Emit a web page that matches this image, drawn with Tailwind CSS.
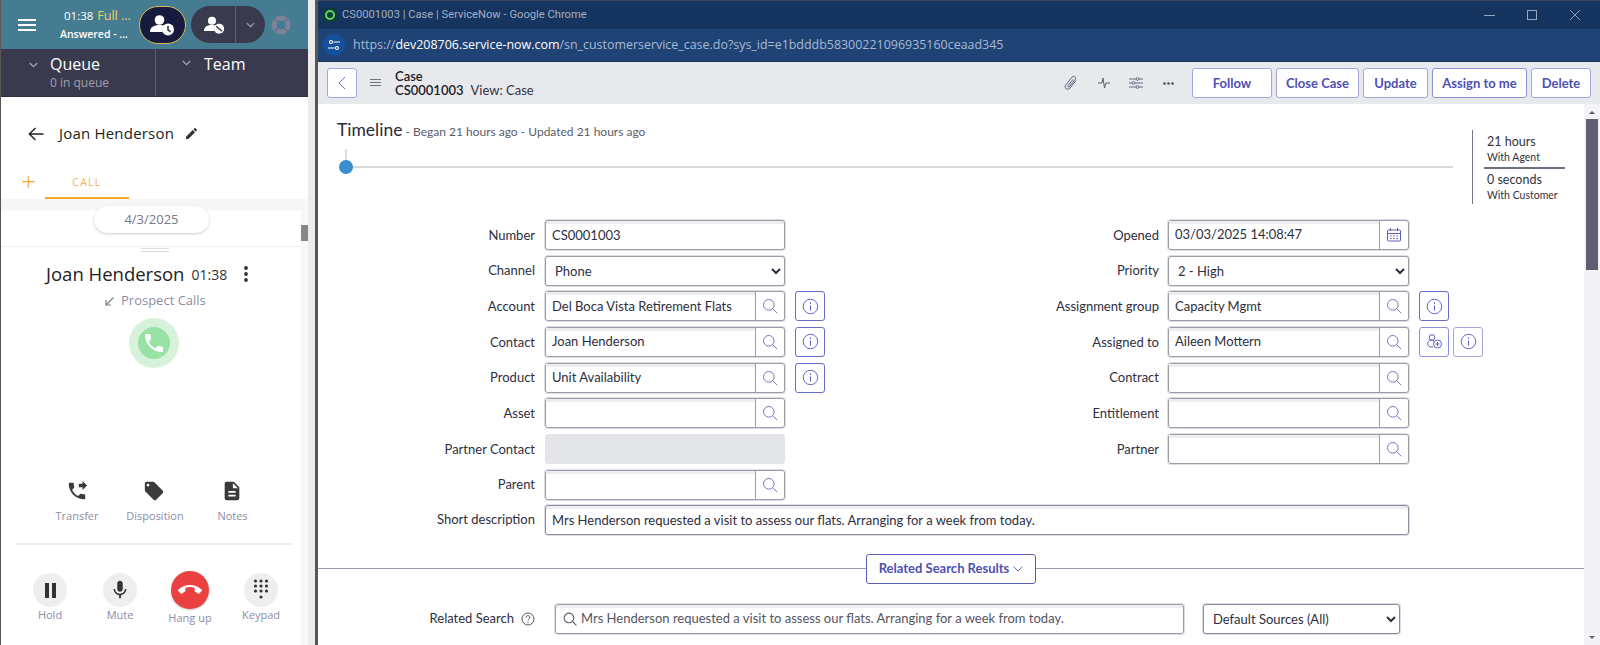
<!DOCTYPE html>
<html>
<head>
<meta charset="UTF-8" />
<title>CS0001003 | Case | ServiceNow</title>
<script src="https://cdn.jsdelivr.net/npm/@tailwindcss/browser@4"></script>
</head>
<body class="bg-white">
<svg class="hidden">
	<symbol id="search" viewBox="0 0 16 16"><circle cx="6.8" cy="6.8" r="5.3" fill="none" stroke="#7478cc" stroke-width="1"/><path d="M10.6 10.6l4.6 4.6" stroke="#7478cc" stroke-width="1" fill="none"/></symbol>
	<symbol id="info" viewBox="0 0 16 16"><circle cx="8" cy="8" r="6.8" fill="none" stroke="#5c60bd" stroke-width="0.9"/><path d="M8 7v4.8M8 4.2v1.4" stroke="#5c60bd" stroke-width="1" fill="none"/></symbol>
</svg>
<div class="flex w-[1600px] h-[645px] overflow-hidden font-['Lato',sans-serif]">

	<!-- softphone panel -->
	<aside class="w-[308px] shrink-0 h-full flex flex-col border-l border-[#5b5655] font-['Open_Sans',sans-serif]">
		<div class="h-[49px] bg-[#467c92] flex items-center text-white">
			<svg class="w-[18px] h-[12px] ml-[17px]" viewBox="0 0 18 12" fill="#fff"><rect y="0" width="18" height="2"/><rect y="5" width="18" height="2"/><rect y="10" width="18" height="2"/></svg>
			<div class="w-[76px] ml-[28px] mt-[1px] text-[11.5px] leading-[18px] whitespace-nowrap">
				<div>01:38 <span class="text-[#f2d14f] text-[12.5px] ml-[1px]">Full ...</span></div>
				<div class="text-[10.5px] -ml-[4px] font-semibold">Answered - ...</div>
			</div>
			<button class="w-[47px] h-[38px] ml-[-1px] rounded-full bg-[#171a3c] border border-[#d7bd55] flex items-center justify-center">
				<svg class="w-[25px] h-[22px]" viewBox="0 0 25 22"><circle cx="9.5" cy="6" r="4.8" fill="#fff"/><path d="M0 18c0-5 4-7 9.5-7 2 0 3.5.3 4.8.8a7 7 0 0 0-1.8 6.2z" fill="#fff"/><circle cx="18" cy="15.5" r="6" fill="#fff"/><path d="M18 12v4l2.6 1.6" stroke="#171a3c" stroke-width="1.4" fill="none"/></svg>
			</button>
			<div class="w-[74px] h-[37px] ml-[5px] rounded-full bg-[#3a3a4e] flex items-center">
				<div class="w-[45px] h-full flex items-center justify-center border-r border-[#5f6072] pl-[2px]">
					<svg class="w-[21px] h-[20px]" viewBox="0 0 25 22"><circle cx="9.5" cy="6" r="4.8" fill="#fff"/><path d="M0 18c0-5 4-7 9.5-7 2 0 3.5.3 4.8.8a7 7 0 0 0-1.8 6.2z" fill="#fff"/><circle cx="18" cy="15.5" r="6" fill="#fff"/><path d="M14.5 12.5l7 6" stroke="#3a3a4e" stroke-width="1.8"/></svg>
				</div>
				<svg class="w-[9px] h-[6px] ml-[10px]" viewBox="0 0 9 6" fill="none" stroke="#8b8c9c" stroke-width="1.5"><path d="M.8 1l3.7 3.6L8.2 1"/></svg>
			</div>
			<svg class="w-[20px] h-[20px] ml-[6px]" viewBox="0 0 20 20"><circle cx="10" cy="10" r="9.5" fill="#7b8398"/><path d="M3.3 3.3l13.4 13.4M16.7 3.3L3.3 16.7" stroke="#5f6a80" stroke-width="1.2"/><circle cx="10" cy="10" r="4.5" fill="#467c92"/></svg>
		</div>
		<div class="h-[48px] bg-[#3a3a4e] flex border-b border-[#2e2e3f]">
			<div class="w-[155px] flex border-r border-[#5c5d6e]">
				<svg class="w-[9px] h-[6px] ml-[28px] mt-[13px]" viewBox="0 0 9 6" fill="none" stroke="#a6a7b5" stroke-width="1.3"><path d="M.8 1l3.7 3.6L8.2 1"/></svg>
				<div class="ml-[12px] mt-[4px]">
					<div class="text-white text-[16px] leading-[22px]">Queue</div>
					<div class="text-[#a0a1af] text-[12px] leading-[17px] mt-[-1px]">0 in queue</div>
				</div>
			</div>
			<div class="flex-1 flex">
				<svg class="w-[9px] h-[6px] ml-[26px] mt-[11px]" viewBox="0 0 9 6" fill="none" stroke="#a6a7b5" stroke-width="1.3"><path d="M.8 1l3.7 3.6L8.2 1"/></svg>
				<div class="ml-[13px] mt-[4px] text-white text-[16px] leading-[22px]">Team</div>
			</div>
		</div>
		<div class="flex items-center h-[72px] pl-[27px] pt-[1px] text-[#222]">
			<svg class="w-[16px] h-[14px]" viewBox="0 0 16 14" fill="none" stroke="#222" stroke-width="1.4"><path d="M15.5 7H1.5M7.5 1L1.3 7l6.2 6"/></svg>
			<span class="ml-[15px] text-[15px] font-medium tracking-[0.2px]">Joan Henderson</span>
			<svg class="w-[11px] h-[11px] ml-[12px]" viewBox="3 3 18 18" fill="#333"><path d="M3 17.25V21h3.75L17.81 9.94l-3.75-3.75L3 17.25zM20.71 7.04c.39-.39.39-1.02 0-1.41l-2.34-2.34c-.39-.39-1.02-.39-1.41 0l-1.83 1.83 3.75 3.75 1.83-1.83z"/></svg>
		</div>
		<div class="h-[30px] flex items-center">
			<span class="text-[#f5a623] text-[26px] font-light leading-none ml-[20px] -mt-[6px]">+</span>
			<div class="ml-[9px] w-[84px] h-full border-b-2 border-[#f9a825] text-center text-[10.5px] tracking-[1.2px] text-[#f6b25e] leading-[27px]">CALL</div>
		</div>
		<div class="relative flex-1 flex flex-col">
			<div class="absolute right-0 top-0 w-[7px] h-full bg-[#f7f7f7]"><div class="mt-[26px] h-[16px] w-[7px] bg-[#878787]"></div></div>
			<div class="h-[48px] bg-gradient-to-b from-[#f6f6f6] from-[11px] to-white to-[12px] pr-[7px] border-b border-[#eeeeee]">
				<div class="w-[115px] h-[27px] ml-[93px] mt-[7px] rounded-full bg-white shadow-[0_1px_3px_rgba(0,0,0,0.2)] text-center text-[13px] leading-[27px] text-[#77778a]">4/3/2025</div>
			</div>
			<div class="w-[28px] h-[4px] ml-[140px] mt-[1px] border-y border-[#dddddd]"></div>
			<div class="flex items-center ml-[45px] mt-[9px] h-[26px]">
				<span class="text-[18.5px] text-[#222] whitespace-nowrap">Joan Henderson</span>
				<span class="ml-[7px] text-[14px] text-[#333]">01:38</span>
				<svg class="w-[4px] h-[16px] ml-[17px]" viewBox="0 0 4 16" fill="#333"><circle cx="2" cy="2" r="1.9"/><circle cx="2" cy="8" r="1.9"/><circle cx="2" cy="14" r="1.9"/></svg>
			</div>
			<div class="flex items-center ml-[104px] mt-[4px] h-[20px] text-[13px] text-[#8c8ca5]">
				<svg class="w-[9px] h-[9px]" viewBox="0 0 9 9" fill="none" stroke="#7c7c8c" stroke-width="1.2"><path d="M8.5.5L1 8M1 3v5h5"/></svg>
				<span class="ml-[7px]">Prospect Calls</span>
			</div>
			<div class="w-[50px] h-[50px] ml-[128px] mt-[7px] rounded-full bg-[#d6f2da] flex items-center justify-center">
				<div class="w-[32px] h-[32px] rounded-full bg-[#98e2a6] flex items-center justify-center">
					<svg class="w-[24px] h-[24px]" viewBox="0 0 24 24" fill="#fff"><path d="M6.62 10.79c1.44 2.83 3.76 5.14 6.59 6.59l2.2-2.2c.27-.27.67-.36 1.02-.24 1.12.37 2.33.57 3.57.57.55 0 1 .45 1 1V20c0 .55-.45 1-1 1-9.39 0-17-7.61-17-17 0-.55.45-1 1-1h3.5c.55 0 1 .45 1 1 0 1.25.2 2.45.57 3.57.11.35.03.74-.25 1.02l-2.2 2.2z"/></svg>
				</div>
			</div>
			<div class="flex mt-[112px] ml-[37px] text-[11px] text-[#8c8ca5] text-center">
				<div class="w-[78px] flex flex-col items-center">
					<svg class="w-[22px] h-[22px]" viewBox="0 0 24 24" fill="#3a3a3a"><path d="M18 11l5-5-5-5v3h-4v4h4v3zm2 4.5c-1.25 0-2.45-.2-3.57-.57-.35-.11-.74-.03-1.02.24l-2.2 2.2c-2.83-1.44-5.15-3.75-6.59-6.59l2.2-2.21c.28-.26.36-.65.25-1C8.7 6.45 8.5 5.25 8.5 4c0-.55-.45-1-1-1H4c-.55 0-1 .45-1 1 0 9.39 7.61 17 17 17 .55 0 1-.45 1-1v-3.5c0-.55-.45-1-1-1z"/></svg>
					<span class="mt-[6px] leading-[16px]">Transfer</span>
				</div>
				<div class="w-[78px] flex flex-col items-center">
					<svg class="w-[22px] h-[22px] -ml-[3px]" viewBox="0 0 24 24" fill="#3a3a3a"><path d="M21.41 11.58l-9-9C12.05 2.22 11.55 2 11 2H4c-1.1 0-2 .9-2 2v7c0 .55.22 1.05.59 1.42l9 9c.36.36.86.58 1.41.58.55 0 1.05-.22 1.41-.59l7-7c.37-.36.59-.86.59-1.41 0-.55-.23-1.06-.59-1.42zM5.5 7C4.67 7 4 6.33 4 5.5S4.67 4 5.5 4 7 4.67 7 5.5 6.33 7 5.5 7z"/></svg>
					<span class="mt-[6px] leading-[16px]">Disposition</span>
				</div>
				<div class="w-[78px] flex flex-col items-center">
					<svg class="w-[22px] h-[22px] -ml-[3px]" viewBox="0 0 24 24" fill="#3a3a3a"><path d="M14 2H6c-1.1 0-1.99.9-1.99 2L4 20c0 1.1.89 2 1.99 2H18c1.1 0 2-.9 2-2V8l-6-6zm2 16H8v-2h8v2zm0-4H8v-2h8v2zm-3-5V3.5L18.5 9H13z"/></svg>
					<span class="mt-[6px] leading-[16px] -ml-[1px]">Notes</span>
				</div>
			</div>
			<div class="h-[2px] bg-[#eeeeee] w-[277px] ml-[15px] mt-[19px]"></div>
			<div class="flex ml-[14px] mt-[28px] text-[11px] text-[#8c8ca5] text-center">
				<div class="w-[70px] flex flex-col items-center">
					<div class="w-[34px] h-[34px] rounded-full bg-[#eeeeee] flex items-center justify-center"><svg class="w-[13px] h-[15px]" viewBox="0 0 13 15" fill="#333"><rect x="1" width="4" height="15"/><rect x="8" width="4" height="15"/></svg></div>
					<span class="leading-[16px]">Hold</span>
				</div>
				<div class="w-[70px] flex flex-col items-center">
					<div class="w-[34px] h-[34px] rounded-full bg-[#eeeeee] flex items-center justify-center"><svg class="w-[22px] h-[22px]" viewBox="0 0 24 24" fill="#333"><path d="M12 14c1.66 0 2.99-1.34 2.99-3L15 5c0-1.66-1.34-3-3-3S9 3.34 9 5v6c0 1.66 1.34 3 3 3zm5.3-3c0 3-2.54 5.1-5.3 5.1S6.7 14 6.7 11H5c0 3.41 2.72 6.23 6 6.72V21h2v-3.28c3.28-.48 6-3.3 6-6.72h-1.7z"/></svg></div>
					<span class="leading-[16px]">Mute</span>
				</div>
				<div class="w-[70px] flex flex-col items-center">
					<div class="w-[38px] h-[38px] -mt-[2px] rounded-full bg-[#ea4040] shadow-[0_1px_2px_rgba(0,0,0,0.25)] flex items-center justify-center"><svg class="w-[24px] h-[24px]" viewBox="0 0 24 24" fill="#fff"><path d="M12 9c-1.6 0-3.15.25-4.6.72v3.1c0 .39-.23.74-.56.9-.98.49-1.87 1.12-2.66 1.85-.18.18-.43.28-.7.28-.28 0-.53-.11-.71-.29L.29 13.08c-.18-.17-.29-.42-.29-.7 0-.28.11-.53.29-.71C3.34 8.78 7.46 7 12 7s8.66 1.78 11.71 4.67c.18.18.29.43.29.71 0 .28-.11.53-.29.71l-2.48 2.48c-.18.18-.43.29-.71.29-.27 0-.52-.11-.7-.28-.79-.74-1.69-1.36-2.67-1.85-.33-.16-.56-.5-.56-.9v-3.1C15.15 9.25 13.6 9 12 9z"/></svg></div>
					<span class="leading-[16px] mt-[1px]">Hang up</span>
				</div>
				<div class="w-[72px] flex flex-col items-center">
					<div class="w-[34px] h-[34px] rounded-full bg-[#eeeeee] flex items-center justify-center"><svg class="w-[16px] h-[22px]" viewBox="0 0 16 22" fill="#333"><circle cx="2.5" cy="2" r="1.6"/><circle cx="8" cy="2" r="1.6"/><circle cx="13.5" cy="2" r="1.6"/><circle cx="2.5" cy="7" r="1.6"/><circle cx="8" cy="7" r="1.6"/><circle cx="13.5" cy="7" r="1.6"/><circle cx="2.5" cy="12" r="1.6"/><circle cx="8" cy="12" r="1.6"/><circle cx="13.5" cy="12" r="1.6"/><circle cx="8" cy="18" r="1.6"/></svg></div>
					<span class="leading-[16px]">Keypad</span>
				</div>
			</div>
		</div>
	</aside>
	<div class="w-[7px] shrink-0 bg-[#ececec]"></div>
	<div class="w-[3px] shrink-0 bg-[#5b5655]"></div>

	<!-- chrome window -->
	<main class="flex-1 min-w-0 h-full flex flex-col">
		<div class="h-[29px] bg-[#15345f] border-t border-[#3a4a5c] flex items-center font-['Roboto',sans-serif]">
			<div class="w-[14px] h-[14px] ml-[5px] rounded-[2px] bg-[#0e3b40] flex items-center justify-center"><div class="w-[10px] h-[10px] rounded-full border-[2.5px] border-[#62d84e]"></div></div>
			<span class="ml-[5px] text-[11.2px] text-[#a3b0c4]">CS0001003 | Case | ServiceNow - Google Chrome</span>
			<div class="ml-auto flex items-center pr-[20px]">
				<div class="w-[11px] h-px bg-[#9aa7bc]"></div>
				<div class="w-[10px] h-[10px] border border-[#9aa7bc] ml-[32px]"></div>
				<svg class="w-[10px] h-[10px] ml-[33px]" viewBox="0 0 10 10" stroke="#9aa7bc" fill="none" stroke-width="0.9"><path d="M0 0l10 10M10 0L0 10"/></svg>
			</div>
		</div>
		<div class="h-[33px] bg-[#1f4375] border-b border-[#173763] flex items-center font-['Open_Sans',sans-serif]">
			<div class="w-[22px] h-[22px] ml-[5px] rounded-full bg-[#15509a] flex items-center justify-center">
				<svg class="w-[12px] h-[12px]" viewBox="0 0 12 12" fill="none" stroke="#fff" stroke-width="1.1"><circle cx="3" cy="3" r="1.5"/><path d="M5.5 3H12M0 9h6.5"/><circle cx="9" cy="9" r="1.5"/></svg>
			</div>
			<span class="ml-[8px] text-[12.45px] text-[#a7bad6] whitespace-nowrap">https://<span class="text-white">dev208706.service-now.com</span>/sn_customerservice_case.do?sys_id=e1bdddb58300221096935160ceaad345</span>
		</div>
		<div class="h-[42px] bg-[#e8e9ec] flex items-center pl-[9px] pr-[9px]">
			<button class="w-[30px] h-[30px] bg-white border border-[#a3a5dc] rounded-[3px] flex items-center justify-center">
				<svg class="w-[8px] h-[14px]" viewBox="0 0 8 14" fill="none" stroke="#6a6fc4" stroke-width="1"><path d="M7 1L1 7l6 6"/></svg>
			</button>
			<svg class="w-[11px] h-[8px] ml-[13px]" viewBox="0 0 11 8" fill="#6f7084"><rect width="11" height="1"/><rect y="3" width="11" height="1"/><rect y="6" width="11" height="1"/></svg>
			<div class="ml-[14px] text-[13px] leading-[14px] text-[#1c1c28]">
				<div class="font-semibold">Case</div>
				<div><span class="font-semibold">CS0001003</span><span class="ml-[7px] text-[#333342]">View: Case</span></div>
			</div>
			<div class="ml-auto flex items-center text-[13px] font-bold text-[#4d50b3]">
				<svg class="w-[14px] h-[16px]" viewBox="0 0 14 16" fill="none" stroke="#5d5e75" stroke-width="1"><path d="M12 5.5L6 13c-1.4 1.6-3.4 1.4-4.2.5-.9-1-.9-2.5 0-3.6L8 2.2c1-1.2 2.4-1 3-.4.8.7.8 1.9 0 2.9L5.5 11.500c-.5.6-1.100.6-1.400.3-.4-.4-.3-.9.1-1.400L9 4.500"/></svg>
				<svg class="w-[12px] h-[12px] ml-[20px]" viewBox="0 0 12 12" fill="none" stroke="#5d5e75" stroke-width="1"><path d="M0 6h4l1-5 1.5 10L8 6h4"/></svg>
				<svg class="w-[14px] h-[12px] ml-[19px]" viewBox="0 0 14 12" fill="none" stroke="#5d5e75" stroke-width="0.9"><path d="M0 2h7M10 2h4M0 6h3M6 6h8M0 10h7M10 10h4"/><circle cx="8.5" cy="2" r="1.4"/><circle cx="4.5" cy="6" r="1.4"/><circle cx="8.5" cy="10" r="1.4"/></svg>
				<svg class="w-[11px] h-[3px] ml-[20px] mr-[18px]" viewBox="0 0 11 3" fill="#4a4a5c"><circle cx="1.5" cy="1.5" r="1.3"/><circle cx="5.5" cy="1.5" r="1.3"/><circle cx="9.5" cy="1.5" r="1.3"/></svg>
				<button class="w-[80px] h-[30px] pt-px bg-white border border-[#a3a5dc] rounded-[3px]">Follow</button>
				<button class="w-[83px] h-[30px] pt-px ml-[4px] bg-white border border-[#a3a5dc] rounded-[3px]">Close Case</button>
				<button class="w-[65px] h-[30px] pt-px ml-[4px] bg-white border border-[#a3a5dc] rounded-[3px]">Update</button>
				<button class="w-[95px] h-[30px] pt-px ml-[4px] bg-white border border-[#8f92d6] rounded-[3px]">Assign to me</button>
				<button class="w-[60px] h-[30px] pt-px ml-[4px] bg-white border border-[#a3a5dc] rounded-[3px]">Delete</button>
			</div>
		</div>

		<div class="flex-1 flex min-h-0">
			<div class="flex-1 min-w-0 text-[13px] text-[#2e2e3e]">
				<!-- timeline -->
				<div class="h-[116px] flex">
					<div class="w-[1135px] pl-[19px]">
						<div class="mt-[13px] h-[22px] flex items-baseline">
							<span class="text-[17.5px] text-[#2a2a36]">Timeline</span>
							<span class="ml-[3px] text-[12px] text-[#5c5c6a]">- Began 21 hours ago - Updated 21 hours ago</span>
						</div>
						<div class="relative mt-[10px] h-[20px] ml-[8px]">
							<div class="absolute left-[0px] top-0 w-[2px] h-[12px] bg-[#dcdde1]"></div>
							<div class="absolute left-0 right-0 top-[17px] h-[2px] bg-[#d8d9de]"></div>
							<div class="absolute -left-[6px] top-[11px] w-[14px] h-[14px] rounded-full bg-[#3a8dce]"></div>
						</div>
					</div>
					<div class="ml-[19px] mt-[26px] w-[93px] h-[74px] border-l border-[#77778a] pl-[11px] text-[#333342]">
						<div class="pl-[3px] pt-[3px] text-[12.5px] leading-[18px]">21 hours</div>
						<div class="pl-[3px] text-[10.5px] leading-[13px]">With Agent</div>
						<div class="h-[2px] bg-[#6d6e7e] my-[3px]"></div>
						<div class="pl-[3px] text-[12.5px] leading-[18px] -mt-[1px]">0 seconds</div>
						<div class="pl-[3px] text-[10.5px] leading-[12px] whitespace-nowrap">With Customer</div>
					</div>
				</div>

				<!-- form -->
				<div class="flex">
					<div class="w-[630px] grid grid-cols-[217px_240px_auto] gap-x-[10px] gap-y-[5.67px] items-center auto-rows-[30px]">
						<label class="text-right pt-px">Number</label>
						<input value="CS0001003" class="w-full h-full px-[6px] bg-white border border-[#9b9ca8] rounded-[3px] outline-none shadow-[inset_0_3px_0_#eeeef1,0_0_0_1px_#dddee3]" />
						<div></div>

						<label class="text-right pt-px">Channel</label>
						<select class="w-full h-full pl-[5px] bg-white border border-[#9b9ca8] rounded-[3px] outline-none shadow-[0_0_0_1px_#dddee3]"><option>Phone</option></select>
						<div></div>

						<label class="text-right pt-px">Account</label>
						<div class="flex h-full border border-[#9b9ca8] rounded-[3px] shadow-[0_0_0_1px_#dddee3]">
							<input value="Del Boca Vista Retirement Flats" class="flex-1 min-w-0 px-[6px] outline-none border-r border-[#9b9ca8] shadow-[inset_0_3px_0_#eeeef1]" />
							<div class="w-[28px] flex items-center justify-center"><svg class="w-[16px] h-[16px]"><use href="#search"/></svg></div>
						</div>
						<div class="flex"><button class="w-[30px] h-[30px] border border-[#6a6dc8] rounded-[3px] flex items-center justify-center"><svg class="w-[17px] h-[17px]"><use href="#info"/></svg></button></div>

						<label class="text-right pt-px">Contact</label>
						<div class="flex h-full border border-[#9b9ca8] rounded-[3px] shadow-[0_0_0_1px_#dddee3]">
							<input value="Joan Henderson" class="flex-1 min-w-0 px-[6px] outline-none border-r border-[#9b9ca8] shadow-[inset_0_3px_0_#eeeef1]" />
							<div class="w-[28px] flex items-center justify-center"><svg class="w-[16px] h-[16px]"><use href="#search"/></svg></div>
						</div>
						<div class="flex"><button class="w-[30px] h-[30px] border border-[#6a6dc8] rounded-[3px] flex items-center justify-center"><svg class="w-[17px] h-[17px]"><use href="#info"/></svg></button></div>

						<label class="text-right pt-px">Product</label>
						<div class="flex h-full border border-[#9b9ca8] rounded-[3px] shadow-[0_0_0_1px_#dddee3]">
							<input value="Unit Availability" class="flex-1 min-w-0 px-[6px] outline-none border-r border-[#9b9ca8] shadow-[inset_0_3px_0_#eeeef1]" />
							<div class="w-[28px] flex items-center justify-center"><svg class="w-[16px] h-[16px]"><use href="#search"/></svg></div>
						</div>
						<div class="flex"><button class="w-[30px] h-[30px] border border-[#6a6dc8] rounded-[3px] flex items-center justify-center"><svg class="w-[17px] h-[17px]"><use href="#info"/></svg></button></div>

						<label class="text-right pt-px">Asset</label>
						<div class="flex h-full border border-[#9b9ca8] rounded-[3px] shadow-[0_0_0_1px_#dddee3]">
							<input class="flex-1 min-w-0 px-[6px] outline-none border-r border-[#9b9ca8] shadow-[inset_0_3px_0_#eeeef1]" />
							<div class="w-[28px] flex items-center justify-center"><svg class="w-[16px] h-[16px]"><use href="#search"/></svg></div>
						</div>
						<div></div>

						<label class="text-right pt-px">Partner Contact</label>
						<div class="h-full bg-[#e4e5e9] rounded-[3px]"></div>
						<div></div>

						<label class="text-right pt-px">Parent</label>
						<div class="flex h-full border border-[#9b9ca8] rounded-[3px] shadow-[0_0_0_1px_#dddee3]">
							<input class="flex-1 min-w-0 px-[6px] outline-none border-r border-[#9b9ca8] shadow-[inset_0_3px_0_#eeeef1]" />
							<div class="w-[28px] flex items-center justify-center"><svg class="w-[16px] h-[16px]"><use href="#search"/></svg></div>
						</div>
						<div></div>
					</div>

					<div class="w-[530px] grid grid-cols-[211px_241px_auto] gap-x-[9px] gap-y-[5.67px] items-center auto-rows-[30px] self-start">
						<label class="text-right pt-px">Opened</label>
						<div class="flex h-full border border-[#9b9ca8] rounded-[3px] shadow-[0_0_0_1px_#dddee3]">
							<input value="03/03/2025 14:08:47" class="flex-1 min-w-0 px-[6px] outline-none border-r border-[#9b9ca8] shadow-[inset_0_3px_0_#eeeef1]" />
							<div class="w-[28px] flex items-center justify-center">
								<svg class="w-[14px] h-[14px]" viewBox="0 0 14 14" fill="none" stroke="#5c60bd"><rect x=".5" y="2" width="13" height="11" rx="1"/><path d="M.5 5.5h13M3.5 0v3M10.5 0v3M3 8h1.5M6.300 8h1.500M9.500 8H11M3 10.500h1.500M6.300 10.500h1.500M9.500 10.500H11"/></svg>
							</div>
						</div>
						<div></div>

						<label class="text-right pt-px">Priority</label>
						<select class="w-full h-full pl-[5px] bg-white border border-[#9b9ca8] rounded-[3px] outline-none shadow-[0_0_0_1px_#dddee3]"><option>2 - High</option></select>
						<div></div>

						<label class="text-right pt-px whitespace-nowrap">Assignment group</label>
						<div class="flex h-full border border-[#9b9ca8] rounded-[3px] shadow-[0_0_0_1px_#dddee3]">
							<input value="Capacity Mgmt" class="flex-1 min-w-0 px-[6px] outline-none border-r border-[#9b9ca8] shadow-[inset_0_3px_0_#eeeef1]" />
							<div class="w-[28px] flex items-center justify-center"><svg class="w-[16px] h-[16px]"><use href="#search"/></svg></div>
						</div>
						<div class="flex"><button class="w-[30px] h-[30px] ml-px border border-[#6a6dc8] rounded-[3px] flex items-center justify-center"><svg class="w-[17px] h-[17px]"><use href="#info"/></svg></button></div>

						<label class="text-right pt-px">Assigned to</label>
						<div class="flex h-full border border-[#9b9ca8] rounded-[3px] shadow-[0_0_0_1px_#dddee3]">
							<input value="Aileen Mottern" class="flex-1 min-w-0 px-[6px] outline-none border-r border-[#9b9ca8] shadow-[inset_0_3px_0_#eeeef1]" />
							<div class="w-[28px] flex items-center justify-center"><svg class="w-[16px] h-[16px]"><use href="#search"/></svg></div>
						</div>
						<div class="flex">
							<button class="w-[30px] h-[30px] ml-px border border-[#8f92d6] rounded-[3px] flex items-center justify-center">
								<svg class="w-[15px] h-[15px]" viewBox="0 0 15 15" fill="none" stroke="#5c60bd"><circle cx="5" cy="3.5" r="2.8"/><path d="M7 7.5A3.5 3.5 0 1 0 3.5 13H6"/><circle cx="10.5" cy="10" r="4"/><path d="M8.5 10h4M10.5 8v4"/></svg>
							</button>
							<button class="w-[30px] h-[30px] ml-[4px] border border-[#a3a5dc] rounded-[3px] flex items-center justify-center"><svg class="w-[17px] h-[17px]"><use href="#info"/></svg></button>
						</div>

						<label class="text-right pt-px">Contract</label>
						<div class="flex h-full border border-[#9b9ca8] rounded-[3px] shadow-[0_0_0_1px_#dddee3]">
							<input class="flex-1 min-w-0 px-[6px] outline-none border-r border-[#9b9ca8] shadow-[inset_0_3px_0_#eeeef1]" />
							<div class="w-[28px] flex items-center justify-center"><svg class="w-[16px] h-[16px]"><use href="#search"/></svg></div>
						</div>
						<div></div>

						<label class="text-right pt-px">Entitlement</label>
						<div class="flex h-full border border-[#9b9ca8] rounded-[3px] shadow-[0_0_0_1px_#dddee3]">
							<input class="flex-1 min-w-0 px-[6px] outline-none border-r border-[#9b9ca8] shadow-[inset_0_3px_0_#eeeef1]" />
							<div class="w-[28px] flex items-center justify-center"><svg class="w-[16px] h-[16px]"><use href="#search"/></svg></div>
						</div>
						<div></div>

						<label class="text-right pt-px">Partner</label>
						<div class="flex h-full border border-[#9b9ca8] rounded-[3px] shadow-[0_0_0_1px_#dddee3]">
							<input class="flex-1 min-w-0 px-[6px] outline-none border-r border-[#9b9ca8] shadow-[inset_0_3px_0_#eeeef1]" />
							<div class="w-[28px] flex items-center justify-center"><svg class="w-[16px] h-[16px]"><use href="#search"/></svg></div>
						</div>
						<div></div>
					</div>
				</div>

				<div class="grid grid-cols-[217px_864px] gap-x-[10px] items-center h-[30px] mt-[5px]">
					<label class="text-right pt-px">Short description</label>
					<input value="Mrs Henderson requested a visit to assess our flats. Arranging for a week from today." class="w-full h-full px-[6px] border border-[#8d8e9c] rounded-[3px] outline-none shadow-[inset_0_3px_0_#eeeef1,0_0_0_1px_#dddee3]" />
				</div>

				<!-- related search -->
				<div class="relative mt-[19px] h-[30px] flex justify-center items-center">
					<div class="absolute left-0 right-0 top-[14px] h-px bg-[#9a9bac]"></div>
					<button class="relative w-[170px] h-[30px] bg-white border border-[#5a5dc0] rounded-[3px] font-bold text-[13px] text-[#4d50b3] flex items-center justify-center">
						Related Search Results
						<svg class="w-[10px] h-[6px] ml-[4px]" viewBox="0 0 10 6" fill="none" stroke="#6a6fc4"><path d="M.5.5L5 5l4.5-4.500"/></svg>
					</button>
				</div>
				<div class="flex items-center h-[30px] mt-[20px]">
					<label class="w-[196px] text-right pt-px">Related Search</label>
					<svg class="w-[14px] h-[14px] ml-[7px]" viewBox="0 0 14 14" fill="none" stroke="#555566"><circle cx="7" cy="7" r="6"/><path d="M5 5.5C5 3 9 3 9 5.5 9 7 7 7 7 8.5M7 10v1.2"/></svg>
					<div class="w-[629px] h-full ml-[20px] flex items-center border border-[#9b9ca8] rounded-[3px] pl-[7px] shadow-[inset_0_3px_0_#eeeef1,0_0_0_1px_#dddee3]">
						<svg class="w-[14px] h-[14px] shrink-0" viewBox="0 0 16 16" fill="none" stroke="#555566" stroke-width="1.2"><circle cx="6.8" cy="6.8" r="5.5"/><path d="M10.8 10.8l4.5 4.5"/></svg>
						<input value="Mrs Henderson requested a visit to assess our flats. Arranging for a week from today." class="flex-1 min-w-0 pl-[4px] outline-none bg-transparent text-[#55555f]" />
					</div>
					<select class="w-[197px] h-full ml-[19px] pl-[5px] bg-white border border-[#8d8e9c] rounded-[3px] outline-none shadow-[0_0_0_1px_#dddee3]"><option>Default Sources (All)</option></select>
				</div>
			</div>

			<!-- scrollbar -->
			<div class="w-[16px] shrink-0 bg-[#f3f3f7] flex flex-col items-center">
				<div class="w-0 h-0 mt-[7px] border-x-[3px] border-x-transparent border-b-[3px] border-b-[#5d5d6e]"></div>
				<div class="w-[12px] h-[151px] mt-[5px] bg-[#5e5e70]"></div>
				<div class="w-0 h-0 mt-auto mb-[6px] border-x-[3px] border-x-transparent border-t-[3px] border-t-[#5d5d6e]"></div>
			</div>
		</div>
	</main>
</div>
</body>
</html>
